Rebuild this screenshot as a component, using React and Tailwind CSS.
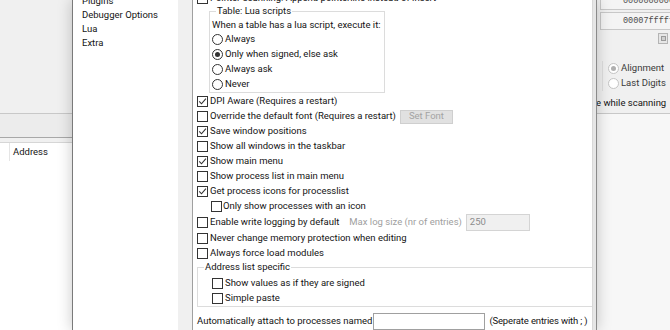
import React from 'react';

function Check({ on }) {
  return (
    <span className="flex h-[11px] w-[11px] shrink-0 items-center justify-center border border-[#333333] bg-white">
      {on && (
        <svg width="9" height="9" viewBox="0 0 9 9" fill="none">
          <path d="M1.2 4.4 3.5 6.8 7.9 1.6" stroke="#333333" strokeWidth="1.1" />
        </svg>
      )}
    </span>
  );
}

function Radio({ on, muted }) {
  return (
    <span
      className={
        'flex h-[11px] w-[11px] shrink-0 items-center justify-center rounded-full border bg-white ' +
        (muted ? 'border-[#c4c4c4]' : 'border-[#333333]')
      }
    >
      {on && <span className={'h-[5px] w-[5px] rounded-full ' + (muted ? 'bg-[#b0b0b0]' : 'bg-[#333333]')} />}
    </span>
  );
}

function CheckRow({ on, children, indent = '', gap = 'ml-[2px]', extra }) {
  return (
    <div className={'flex h-[15px] items-center whitespace-nowrap ' + indent}>
      <Check on={on} />
      <span className={gap}>{children}</span>
      {extra}
    </div>
  );
}

function RadioRow({ on, children }) {
  return (
    <div className="flex h-[15px] items-center whitespace-nowrap">
      <Radio on={on} />
      <span className="ml-[2px]">{children}</span>
    </div>
  );
}

export default function App() {
  return (
    <div className="flex h-[330px] w-[670px] overflow-hidden bg-[#f0f0f0] font-['Segoe_UI','Roboto',sans-serif] text-[9.5px] text-[#141414]">
      {/* main window, left part */}
      <div className="flex w-[72px] shrink-0 flex-col">
        <div className="h-[114px] border-b border-[#c8c8c8] bg-[#f0f0f0]" />
        <div className="h-[24px] border-b border-[#a8a8a8] bg-[#ececec]" />
        <div className="h-[5px] border-b border-[#d6d6d6] bg-[#f0f0f0]" />
        <div className="flex-1 bg-white">
          <div className="flex h-[18px] items-center">
            <span className="ml-[9px] h-[18px] border-l border-[#e5e5e5]" />
            <span className="ml-[3px]">Address</span>
          </div>
        </div>
      </div>

      {/* settings dialog */}
      <div className="relative z-10 flex w-[525px] shrink-0 border-x border-l-[#7a7a7a] border-r-[#8a8a8a] bg-[#f0f0f0] shadow-[0_0_14px_rgba(0,0,0,0.22)]">
        <div className="flex w-[105px] shrink-0 flex-col bg-white pl-[9px]">
          <div className="mt-[-6px] flex h-[14px] items-center">Plugins</div>
          <div className="flex h-[14px] items-center">Debugger Options</div>
          <div className="flex h-[14px] items-center">Lua</div>
          <div className="flex h-[14px] items-center">Extra</div>
        </div>

        <div className="ml-[14px] flex w-[401px] shrink-0 flex-col overflow-hidden border-x border-l-[#a0a0a0] border-r-[#d8d8d8] bg-white pl-[4px]">
          <CheckRow indent="mt-[-9px]">Pointer scanning: Append pointerline instead of insert</CheckRow>

          <div className="relative ml-[12px] mt-[5px] flex w-[176px] flex-col border border-[#dcdcdc] pl-[2px] pt-[6px]">
            <span className="absolute left-[6px] top-[-8px] bg-white px-[1px] leading-[14px]">Table: Lua scripts</span>
            <div className="flex h-[14px] items-center whitespace-nowrap">When a table has a lua script, execute it:</div>
            <RadioRow>Always</RadioRow>
            <RadioRow on>Only when signed, else ask</RadioRow>
            <RadioRow>Always ask</RadioRow>
            <RadioRow>Never</RadioRow>
          </div>

          <CheckRow on indent="mt-[1px]">DPI Aware (Requires a restart)</CheckRow>
          <CheckRow
            extra={
              <span className="ml-[4px] flex h-[14px] w-[53px] items-center justify-center border border-[#cfcfcf] bg-[#e1e1e1] text-[#a3a3a3]">
                Set Font
              </span>
            }
          >
            Override the default font (Requires a restart)
          </CheckRow>
          <CheckRow on>Save window positions</CheckRow>
          <CheckRow>Show all windows in the taskbar</CheckRow>
          <CheckRow on>Show main menu</CheckRow>
          <CheckRow>Show process list in main menu</CheckRow>
          <CheckRow on>Get process icons for processlist</CheckRow>
          <CheckRow indent="ml-[14px]" gap="ml-[1px]">Only show processes with an icon</CheckRow>
          <div className="flex h-[17px] items-center whitespace-nowrap">
            <Check />
            <span className="ml-[2px]">Enable write logging by default</span>
            <span className="ml-[10px] text-[#a0a0a0]">Max log size (nr of entries)</span>
            <span className="ml-[4px] flex h-[17px] w-[64px] items-center border border-[#d4d4d4] bg-[#f0f0f0] pl-[3px] text-[#8c8c8c]">
              250
            </span>
          </div>
          <CheckRow>Never change memory protection when editing</CheckRow>
          <CheckRow>Always force load modules</CheckRow>

          <div className="relative mt-[6px] flex w-[396px] flex-col border border-[#dcdcdc] pl-[14px] pt-[8px]">
            <span className="absolute left-[6px] top-[-8px] bg-white px-[1px] leading-[14px]">Address list specific</span>
            <CheckRow>Show values as if they are signed</CheckRow>
            <CheckRow>Simple paste</CheckRow>
          </div>

          <div className="mt-[5px] flex h-[18px] items-center whitespace-nowrap">
            <span>Automatically attach to processes named</span>
            <span className="ml-[1px] h-[17px] w-[112px] shrink-0 border border-[#a0a0a0] bg-white" />
            <span className="ml-[4px] tracking-[-0.15px]">(Seperate entries with ; )</span>
          </div>
        </div>

        <div className="w-[3px] shrink-0 bg-[#e6e6e6]" />
      </div>

      {/* main window, right part */}
      <div className="flex flex-1 flex-col overflow-hidden">
        <div className="ml-[3px] mt-[-8px] flex h-[18px] items-center border-y border-l border-[#c8c8c8] bg-[#f4f4f4] pl-[22px] font-['Liberation_Mono',monospace] text-[8.5px] whitespace-nowrap text-[#4a4a4a]">
          0000000000000000
        </div>
        <div className="ml-[3px] mt-[2px] flex h-[18px] items-center border-y border-l border-[#c8c8c8] bg-[#f4f4f4] pl-[22px] font-['Liberation_Mono',monospace] text-[8.5px] whitespace-nowrap text-[#4a4a4a]">
          00007fffffffffff
        </div>
        <div className="ml-[61px] mt-[3px] flex h-[11px] w-[10px] items-center justify-center border border-[#b4b4b4] bg-[#e6e6e6]">
          <span className="h-[5px] w-[5px] border border-[#9a9a9a] bg-[#d0d0d0]" />
        </div>
        <div className="ml-[5px] mt-[17px] flex flex-col border-l border-[#dedede] pl-[5px] text-[#3a3a3a]">
          <div className="flex h-[15px] items-center whitespace-nowrap">
            <Radio on muted />
            <span className="ml-[2px]">Alignment</span>
          </div>
          <div className="flex h-[15px] items-center whitespace-nowrap">
            <Radio muted />
            <span className="ml-[2px]">Last Digits</span>
          </div>
        </div>
        <div className="ml-[-1px] mt-[5px] flex h-[14px] items-center whitespace-nowrap">e while scanning</div>
        <div className="h-[4px] border-b border-[#c8c8c8]" />
        <div className="flex-1 bg-[#f7f7f7]" />
      </div>
    </div>
  );
}
